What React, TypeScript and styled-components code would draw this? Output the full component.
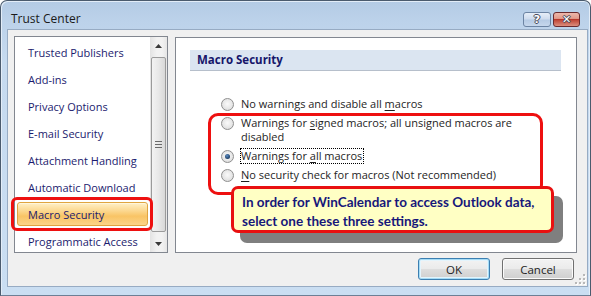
import React from "react";
import styled, { createGlobalStyle, css } from "styled-components";

const GlobalStyle = createGlobalStyle`
  html, body {
    margin: 0;
    padding: 0;
    background: #ffffff;
  }
  * {
    box-sizing: border-box;
  }
`;

const uiFont = `"Open Sans", "Noto Sans", sans-serif`;

const Window = styled.div`
  width: 591px;
  height: 296px;
  display: flex;
  flex-direction: column;
  border: 1px solid #4b5b6e;
  border-bottom-color: #6d7f95;
  border-radius: 7px 7px 0 0;
  padding: 0 2px 8px 6px;
  background: linear-gradient(180deg, #b4cbe5 0px, #bcd2ea 20px, #c6daef 60px, #cadef2 100%);
  box-shadow: inset 1px 1px 0 #e3edf8, inset -1px 0 0 #e3edf8;
  font-family: ${uiFont};
  font-size: 11px;
  color: #1e1e1e;
`;

const TitleBar = styled.div`
  height: 28px;
  display: flex;
  align-items: flex-start;
  justify-content: space-between;
  padding: 0 8px 0 4px;
`;

const Title = styled.div`
  margin-top: 10px;
  font-size: 12px;
  line-height: 16px;
  color: #1a1a1a;
`;

const CaptionButtons = styled.div`
  display: flex;
  gap: 2px;
  margin-top: 11px;
`;

const CaptionButton = styled.div<{ $close?: boolean }>`
  height: 15px;
  display: flex;
  align-items: center;
  justify-content: center;
  border: 1px solid #6c84a3;
  border-radius: 3px;
  font-family: "DejaVu Sans", sans-serif;
  font-weight: bold;
  font-size: 11px;
  line-height: 1;
  color: #ffffff;
  text-shadow: 0 0 1px #4a4a5a, 1px 0 0 #4a4a5a, -1px 0 0 #4a4a5a, 0 1px 0 #4a4a5a, 0 -1px 0 #4a4a5a;
  ${({ $close }) =>
    $close
      ? css`
          width: 27px;
          border-color: #6a2a2e;
          background: linear-gradient(180deg, #edb7ab 0%, #e29a8b 42%, #b8392c 50%, #c24c3d 58%, #dc8e7d 100%);
        `
      : css`
          width: 28px;
          background: linear-gradient(180deg, #e6eef8 0%, #cfdcee 45%, #b6cbe4 55%, #c6d7ec 100%);
        `}
`;

const Client = styled.div`
  flex: 1;
  position: relative;
  display: flex;
  flex-direction: column;
  background: #f0f0f0;
  border: 1px solid #97abc3;
`;

const Body = styled.div`
  display: flex;
  align-items: flex-start;
  gap: 7px;
  padding: 6px 10px 0 6px;
`;

const NavList = styled.div`
  width: 154px;
  height: 217px;
  display: flex;
  background: #ffffff;
  border: 1px solid #828790;
`;

const NavItems = styled.ul`
  flex: 1;
  list-style: none;
  margin: 0;
  padding: 1px 0 0 0;
`;

const NavItem = styled.li`
  height: 27px;
  padding: 2px 0 1px 2px;
`;

const NavLabel = styled.div<{ $selected?: boolean }>`
  position: relative;
  width: 131px;
  height: 24px;
  display: flex;
  align-items: center;
  padding-left: 10px;
  border: 1px solid transparent;
  border-radius: 3px;
  color: #1b1b6e;
  white-space: nowrap;
  ${({ $selected }) =>
    $selected &&
    css`
      border-color: #e0a540;
      background: linear-gradient(180deg, #fff0c8 0%, #fcd890 35%, #f9c465 60%, #fbd489 100%);
      box-shadow: inset 0 1px 0 #fff6dc;
    `}
`;

const RedMark = styled.div<{ $radius: number }>`
  position: absolute;
  border: 3px solid #ee1010;
  border-radius: ${({ $radius }) => $radius}px;
  pointer-events: none;
`;

const NavMark = styled(RedMark)`
  left: -7px;
  top: -6px;
  right: -6px;
  bottom: -6px;
`;

const ScrollBar = styled.div`
  width: 17px;
  display: flex;
  flex-direction: column;
  background: linear-gradient(90deg, #e3e3e3, #f2f2f2 40%, #f2f2f2 70%, #e6e6e6);
`;

const ScrollArrow = styled.div`
  height: 17px;
  display: flex;
  align-items: center;
  justify-content: center;
`;

const Thumb = styled.div`
  flex: 1;
  margin: 3px 1px;
  display: flex;
  align-items: center;
  justify-content: center;
  border: 1px solid #9b9b9b;
  border-radius: 2px;
  background: linear-gradient(90deg, #f3f3f3, #e8e8e8 50%, #d8d8d8);
`;

const Panel = styled.div`
  position: relative;
  flex: 1;
  height: 216px;
  margin-top: 1px;
  background: #ffffff;
  border: 1px solid #828790;
  padding: 12px 15px 0 14px;
`;

const SectionHeader = styled.div`
  height: 21px;
  padding-left: 7px;
  background: #dbe5f1;
  border-bottom: 1px solid #b6bfcb;
  font-weight: bold;
  font-size: 11.5px;
  line-height: 20px;
  color: #15156a;
`;

const Options = styled.div`
  margin-top: 26px;
  padding-left: 31px;
  display: flex;
  flex-direction: column;
  gap: 5px;
`;

const Option = styled.div`
  display: flex;
  align-items: flex-start;
  gap: 7px;
  line-height: 14px;
`;

const Radio = styled.span<{ $checked?: boolean }>`
  flex: none;
  width: 13px;
  height: 13px;
  margin-top: 1px;
  border-radius: 50%;
  border: 1px solid #8f8f8f;
  background: radial-gradient(circle at 50% 45%, #fafafa 0%, #e9e9e9 50%, #d4d4d4 100%);
  display: flex;
  align-items: center;
  justify-content: center;
  &::after {
    content: "";
    width: 5px;
    height: 5px;
    border-radius: 50%;
    background: ${({ $checked }) =>
      $checked ? "radial-gradient(circle at 40% 35%, #5c8cc2, #1d3e66 70%, #0f2038)" : "transparent"};
  }
`;

const OptionText = styled.span<{ $focused?: boolean }>`
  color: #1e1e1e;
  border: 1px dotted ${({ $focused }) => ($focused ? "#000" : "transparent")};
  margin: -1px 0 -1px -1px;
  padding: 0 1px 0 0;
  u {
    text-decoration: underline;
    text-underline-offset: 2px;
  }
`;

const OptionsMark = styled(RedMark)`
  left: 32px;
  top: 75px;
  width: 335px;
  height: 82px;
`;

const Callout = styled.div`
  position: absolute;
  left: 55px;
  top: 148px;
  width: 323px;
  height: 47px;
  padding: 4px 8px;
  background: #ffffc4;
  border: 3px solid #e81010;
  border-radius: 7px;
  box-shadow: 9px 10px 0 #7f7f7f;
  font-family: Lato, "Open Sans", sans-serif;
  font-weight: bold;
  font-size: 13.5px;
  line-height: 19px;
  color: #17177a;
  white-space: nowrap;
`;

const Footer = styled.div`
  display: flex;
  justify-content: flex-end;
  gap: 12px;
  margin-top: 5px;
  padding-right: 13px;
`;

const DialogButton = styled.button<{ $default?: boolean }>`
  width: 72px;
  height: 22px;
  padding: 0;
  font-family: ${uiFont};
  font-size: 11.5px;
  color: #1e1e1e;
  border-radius: 3px;
  border: 1px solid ${({ $default }) => ($default ? "#3c7fb1" : "#707070")};
  background: linear-gradient(180deg, #f3f3f3 0%, #ebebeb 48%, #dddddd 52%, #cfcfcf 100%);
  box-shadow: ${({ $default }) =>
    $default ? "inset 0 0 0 1px #a6dcf6, inset 0 0 0 2px #e4f4fc" : "inset 0 0 0 1px #fbfbfb"};
`;

const Grip = styled.svg`
  position: absolute;
  right: 1px;
  bottom: 1px;
`;

const navItems = [
  "Trusted Publishers",
  "Add-ins",
  "Privacy Options",
  "E-mail Security",
  "Attachment Handling",
  "Automatic Download",
  "Macro Security",
  "Programmatic Access",
];

const gripDots = [
  [8, 0],
  [8, 4],
  [4, 4],
  [8, 8],
  [4, 8],
  [0, 8],
];

export default function App() {
  return (
    <>
      <GlobalStyle />
      <Window>
        <TitleBar>
          <Title>Trust Center</Title>
          <CaptionButtons>
            <CaptionButton>?</CaptionButton>
            <CaptionButton $close>✕</CaptionButton>
          </CaptionButtons>
        </TitleBar>
        <Client>
          <Body>
            <NavList>
              <NavItems>
                {navItems.map((item) => {
                  const selected = item === "Macro Security";
                  return (
                    <NavItem key={item}>
                      <NavLabel $selected={selected}>
                        {item}
                        {selected && <NavMark $radius={6} />}
                      </NavLabel>
                    </NavItem>
                  );
                })}
              </NavItems>
              <ScrollBar>
                <ScrollArrow>
                  <svg width="7" height="4" viewBox="0 0 7 4">
                    <path d="M0 4 L3.5 0 L7 4 Z" fill="#3a3a3a" />
                  </svg>
                </ScrollArrow>
                <Thumb>
                  <svg width="7" height="7" viewBox="0 0 7 7">
                    <path d="M0 0.5 H7 M0 3.5 H7 M0 6.5 H7" stroke="#6a6a6a" strokeWidth="1" />
                  </svg>
                </Thumb>
                <ScrollArrow>
                  <svg width="7" height="4" viewBox="0 0 7 4">
                    <path d="M0 0 L7 0 L3.5 4 Z" fill="#3a3a3a" />
                  </svg>
                </ScrollArrow>
              </ScrollBar>
            </NavList>
            <Panel>
              <SectionHeader>Macro Security</SectionHeader>
              <Options>
                <Option>
                  <Radio />
                  <OptionText>
                    No warnings and disable all <u>m</u>acros
                  </OptionText>
                </Option>
                <Option>
                  <Radio />
                  <OptionText>
                    Warnings for <u>s</u>igned macros; all unsigned macros are
                    <br />
                    disabled
                  </OptionText>
                </Option>
                <Option>
                  <Radio $checked />
                  <OptionText $focused>
                    Warnings for <u>a</u>ll macros
                  </OptionText>
                </Option>
                <Option>
                  <Radio />
                  <OptionText>
                    <u>N</u>o security check for macros (Not recommended)
                  </OptionText>
                </Option>
              </Options>
              <OptionsMark $radius={10} />
              <Callout>
                In order for WinCalendar to access Outlook data,
                <br />
                select one these three settings.
              </Callout>
            </Panel>
          </Body>
          <Footer>
            <DialogButton $default>OK</DialogButton>
            <DialogButton>Cancel</DialogButton>
          </Footer>
          <Grip width="11" height="11" viewBox="0 0 11 11">
            {gripDots.map(([x, y]) => (
              <g key={`${x}-${y}`}>
                <rect x={x + 1} y={y + 1} width="2" height="2" fill="#ffffff" />
                <rect x={x} y={y} width="2" height="2" fill="#b8b8b8" />
              </g>
            ))}
          </Grip>
        </Client>
      </Window>
    </>
  );
}
